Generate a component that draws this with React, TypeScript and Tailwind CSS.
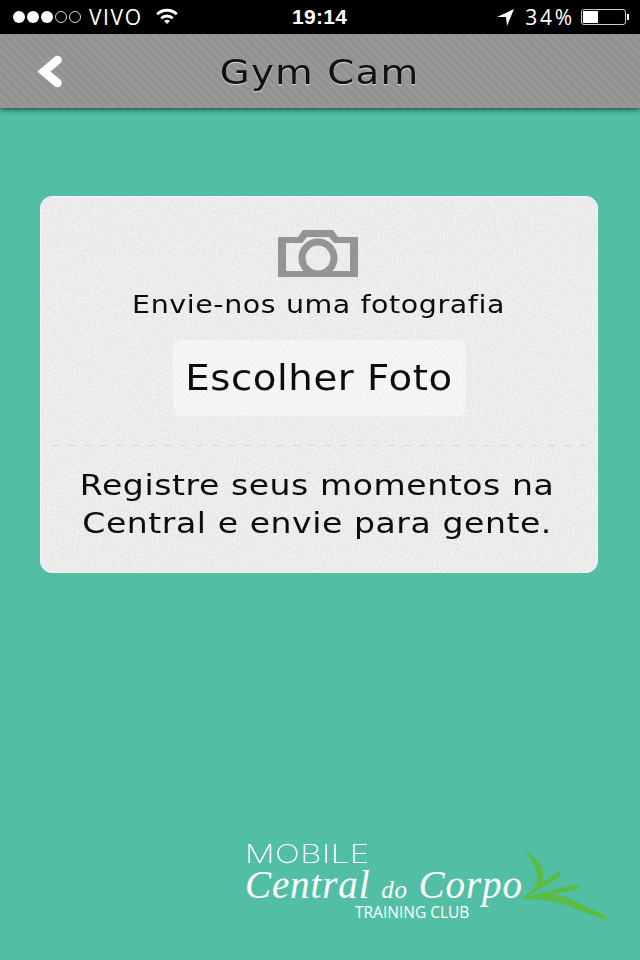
import React from "react";

function StatusBar() {
  return (
    <div className="h-[34px] bg-black text-white flex items-center justify-between pl-[13px] pr-[11px] relative">
      <div className="flex items-center">
        <div className="flex items-center gap-[2px]">
          {[0, 1, 2].map((i) => (
            <span key={i} className="w-[12px] h-[12px] rounded-full bg-white" />
          ))}
          {[0, 1].map((i) => (
            <span key={i} className="w-[12px] h-[12px] rounded-full border border-[#ddd]" />
          ))}
        </div>
        <span className="ml-[8px] font-['Open_Sans',sans-serif] text-[21px] leading-none font-normal tracking-[1.6px]">VIVO</span>
        <svg className="ml-[12px] mb-[2px]" width="24" height="18" viewBox="0 0 26 20">
          <path d="M1 7 A17 17 0 0 1 25 7 L22.8 9.3 A14 14 0 0 0 3.2 9.3 Z" fill="#fff" />
          <path d="M5.5 11.3 A11 11 0 0 1 20.5 11.3 L18.3 13.6 A8 8 0 0 0 7.7 13.6 Z" fill="#fff" />
          <path d="M9.8 15.6 A5 5 0 0 1 16.2 15.6 L13 19 Z" fill="#fff" />
        </svg>
      </div>
      <span className="absolute left-[292px] top-[4px] font-bold text-[21px] leading-[26px] font-['Liberation_Sans',sans-serif] tracking-[0.3px]">19:14</span>
      <div className="flex items-center">
        <svg width="19" height="19" viewBox="0 0 19 19">
          <path d="M1 9 L18 1 L11 18 L10 9 Z" fill="#fff" />
        </svg>
        <span className="ml-[10px] font-['Open_Sans',sans-serif] font-normal text-[21px] leading-none tracking-[2.8px]">34%</span>
        <div className="ml-[6px] flex items-center">
          <div className="w-[45px] h-[16px] border border-[#ccc] rounded-[3px] p-[1px]">
            <div className="h-full w-[15px] bg-white" />
          </div>
          <div className="w-[2px] h-[6px] bg-white ml-[1px]" />
        </div>
      </div>
    </div>
  );
}

function Header() {
  return (
    <div className="h-[74px] relative flex items-center justify-center bg-[#949494] bg-[repeating-linear-gradient(45deg,#919191_0px,#919191_3px,#989898_3px,#989898_6px)] shadow-[0_2px_5px_rgba(0,60,45,0.75)]">
      <svg className="absolute left-[38px] top-[21px]" width="26" height="33" viewBox="0 0 26 33">
        <path d="M19.5 5 L6 16.5 L19.5 28" fill="none" stroke="#fff" strokeWidth="8.5" strokeLinecap="round" strokeLinejoin="miter" />
      </svg>
      <span className="font-['DejaVu_Sans',sans-serif] text-[34px] leading-none tracking-[1px] scale-x-[1.14] text-[#111] [text-shadow:0_1px_1px_#ddd] mt-[1px]">Gym Cam</span>
    </div>
  );
}

function CameraIcon() {
  return (
    <svg width="80" height="47" viewBox="0 0 80 47">
      <path
        fillRule="evenodd"
        fill="#949494"
        d="M0 7 H20 L25 0 H55 L60 7 H80 V47 H0 Z M8 13 V41 H72 V13 H56 L51 7 H29 L24 13 Z"
      />
      <circle cx="40" cy="28" r="16" fill="none" stroke="#949494" strokeWidth="7" />
    </svg>
  );
}

function Noise() {
  return (
    <svg className="absolute inset-0 w-full h-full" aria-hidden="true">
      <filter id="card-noise">
        <feTurbulence type="fractalNoise" baseFrequency="0.45" numOctaves="3" seed="4" />
        <feColorMatrix
          type="matrix"
          values="0 0 0 0 0.55  0 0 0 0 0.55  0 0 0 0 0.55  1.2 0 0 0 -0.35"
        />
      </filter>
      <rect width="100%" height="100%" filter="url(#card-noise)" opacity="0.45" />
    </svg>
  );
}

function Logo() {
  return (
    <div className="relative w-[365px] h-[80px] text-white">
      <span className="absolute left-[0px] top-[3px] text-[26px] leading-[20px] font-['Inter',sans-serif] font-extralight tracking-[0.3px] scale-x-[1.27] origin-left">MOBILE</span>
      <span className="absolute left-[0px] top-[28px] text-[39px] leading-[32px] italic font-['Liberation_Serif',serif] tracking-[0.9px] whitespace-nowrap">
        Central <span className="text-[25px]">do</span> Corpo
      </span>
      <span className="absolute left-[110px] top-[63px] text-[15.5px] leading-[16px] font-['Open_Sans',sans-serif] whitespace-nowrap">TRAINING CLUB</span>
      <svg className="absolute left-[270px] top-[8px]" width="95" height="72" viewBox="0 0 95 72">
        <g fill="#5abb46">
          <path d="M9 2 C22 8 33 20 27 34 C24 42 16 46 10 47 C18 42 22 36 22 28 C22 18 16 10 9 2 Z" />
          <path d="M44 23 C46 25 46 27 43 29 C34 35 26 40 17 44 C24 36 34 28 44 23 Z" />
          <path d="M63 35 C65 37 65 39 62 40 C48 44 32 46 15 47 C30 43 48 38 63 35 Z" />
          <path d="M7 48 C25 44 45 44 60 52 C72 58 84 63 92 68 C93 70 91 71 88 70 C72 65 58 58 44 54 C32 51 18 50 7 50 Z" />
        </g>
      </svg>
    </div>
  );
}

export default function App() {
  return (
    <div className="w-[640px] h-[960px] bg-[#52bfa5] flex flex-col overflow-hidden">
      <StatusBar />
      <Header />
      <div className="flex-1 flex flex-col px-[40px] pt-[88px]">
        <div className="relative overflow-hidden w-[558px] h-[377px] rounded-[12px] bg-[#f1f1f1] border border-[#f4f4f4] font-['DejaVu_Sans',sans-serif] text-[#0c0c0c]">
          <Noise />
          <div className="relative flex flex-col items-center">
            <div className="mt-[33px] mr-[3px]">
              <CameraIcon />
            </div>
            <p className="mt-[12px] text-[25px] leading-[32px] tracking-[0.5px] scale-x-[1.14] whitespace-nowrap">Envie-nos uma fotografia</p>
            <div className="mt-[19px] ml-[1px] w-[293px] h-[76px] rounded-[8px] bg-white/45 flex items-center justify-center">
              <span className="mr-[1px] text-[35px] tracking-[0.5px] scale-x-[1.105] whitespace-nowrap">Escolher Foto</span>
            </div>
            <div className="mt-[29px] w-[534px] h-px bg-[repeating-linear-gradient(90deg,#d4d4d4_0px,#d4d4d4_7px,transparent_7px,transparent_16px)]" />
            <p className="mt-[20px] mr-[4px] text-center text-[29px] leading-[38px] tracking-[0.5px] scale-x-[1.14] whitespace-nowrap">
              Registre seus momentos na
              <br />
              Central e envie para gente.
            </p>
          </div>
        </div>
        <div className="mt-auto mb-[39px] ml-[205px]">
          <Logo />
        </div>
      </div>
    </div>
  );
}
